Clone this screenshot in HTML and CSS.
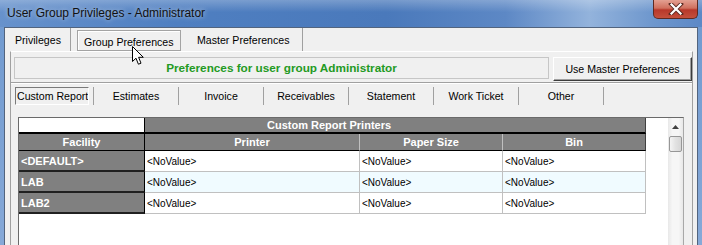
FILE: index.html
```html
<!DOCTYPE html>
<html lang="en">
<head>
    <meta charset="UTF-8">
    <title>User Group Privileges - Administrator</title>
    <link rel="stylesheet" href="styles.css">
</head>
<body>
    <div class="window">
        <div class="titlebar">
            <span class="title">User Group Privileges - Administrator</span>
            <div class="close">
                <svg width="16" height="12" viewBox="0 0 16 12">
                    <path d="M3 1 L13 11 M13 1 L3 11" stroke="#5a2a22" stroke-width="4" stroke-linecap="square"/>
                    <path d="M3.5 1.5 L12.5 10.5 M12.5 1.5 L3.5 10.5" stroke="#fff" stroke-width="2.2" stroke-linecap="square"/>
                </svg>
            </div>
        </div>

        <div class="client">
            <div class="tabs">
                <div class="tab tab-first">Privileges</div>
                <div class="tab tab-active">Group Preferences</div>
                <div class="tab tab-last">Master Preferences</div>
            </div>

            <div class="panel">
                <div class="toolbar">
                    <div class="caption">Preferences for user group Administrator</div>
                    <button class="btn">Use Master Preferences</button>
                </div>

                <div class="subtabs">
                    <div class="subtab subtab-first"><span class="subtab-sel">Custom Report</span></div>
                    <div class="subtab">Estimates</div>
                    <div class="subtab">Invoice</div>
                    <div class="subtab">Receivables</div>
                    <div class="subtab">Statement</div>
                    <div class="subtab">Work Ticket</div>
                    <div class="subtab">Other</div>
                </div>

                <div class="grid">
                    <table class="sheet">
                        <colgroup>
                            <col class="col-facility">
                            <col class="col-printer">
                            <col class="col-paper">
                            <col class="col-bin">
                        </colgroup>
                        <tr class="band-row">
                            <td class="blank"></td>
                            <td class="band" colspan="3">Custom Report Printers</td>
                        </tr>
                        <tr class="head-row">
                            <td class="head head-first">Facility</td>
                            <td class="head">Printer</td>
                            <td class="head">Paper Size</td>
                            <td class="head head-last">Bin</td>
                        </tr>
                        <tr class="data-row">
                            <td class="facility">&lt;DEFAULT&gt;</td>
                            <td>&lt;NoValue&gt;</td>
                            <td>&lt;NoValue&gt;</td>
                            <td>&lt;NoValue&gt;</td>
                        </tr>
                        <tr class="data-row alt">
                            <td class="facility">LAB</td>
                            <td>&lt;NoValue&gt;</td>
                            <td>&lt;NoValue&gt;</td>
                            <td>&lt;NoValue&gt;</td>
                        </tr>
                        <tr class="data-row">
                            <td class="facility">LAB2</td>
                            <td>&lt;NoValue&gt;</td>
                            <td>&lt;NoValue&gt;</td>
                            <td>&lt;NoValue&gt;</td>
                        </tr>
                    </table>

                    <div class="scrollbar">
                        <div class="scroll-up">
                            <svg width="7" height="4" viewBox="0 0 7 4"><path d="M0 4 L3.5 0 L7 4 Z" fill="#404040"/></svg>
                        </div>
                        <div class="thumb"></div>
                    </div>
                </div>
            </div>
        </div>

        <!-- mouse pointer over the tab strip -->
        <svg class="cursor" width="13" height="20" viewBox="0 0 13 20">
            <path d="M0.5 0.5 L0.5 15.5 L4 12.2 L6.4 18.2 L9 17.2 L6.6 11.3 L11.3 11.3 Z" fill="#fff" stroke="#000" stroke-width="1" stroke-linejoin="round"/>
        </svg>
    </div>
</body>
</html>
```

FILE: styles.css
```css
body {
    margin: 0;
    width: 702px;
    height: 245px;
    overflow: hidden;
    background: linear-gradient(to bottom, #6f99cf, #86a9d8);
    font-family: "Liberation Sans", Arial, sans-serif;
    font-size: 10.6px;
    color: #000;
}
.window {
    position: relative;
    height: 245px;
    overflow: hidden;
}
.titlebar {
    height: 27px;
    display: flex;
    align-items: flex-start;
    background:
        linear-gradient(to bottom, rgba(255,255,255,0.25), rgba(255,255,255,0) 45%),
        linear-gradient(to right, #6792cc 0%, #4f7fc1 25%, #4a79bb 55%, #5d88c5 72%, #93b3dc 84%, #6e97cd 93%, #5c88c6 100%);
}
.title {
    padding: 5px 0 0 7px;
    line-height: 16px;
    font-size: 12px;
    color: #111;
    text-shadow: 0 0 5px rgba(255,255,255,0.7);
}
.close {
    margin-left: auto;
    margin-right: 4px;
    width: 43px;
    height: 18px;
    border: 1px solid #5e2a22;
    border-top: none;
    border-radius: 0 0 5px 5px;
    background: linear-gradient(to bottom, #e3a092 0%, #d0705e 45%, #b8382a 55%, #c4503c 100%);
    display: flex;
    align-items: center;
    justify-content: center;
}
.client {
    margin: 0 4px;
    height: 217px;
    overflow: hidden;
    border: 1px solid #52647e;
    border-bottom: none;
    background: #f0f0f0;
}

/* top tab strip */
.tabs {
    display: flex;
    height: 23px;
    padding-left: 3px;
}
.tab {
    display: flex;
    align-items: center;
    box-sizing: border-box;
    white-space: nowrap;
}
.tab-first {
    width: 63px;
    padding-left: 7px;
    border-right: 1px solid #a0a0a0;
}
.tab-active {
    width: 104px;
    height: 21px;
    margin: 2px 0 0 6px;
    padding-left: 6px;
    padding-top: 2px;
    border: 1px solid #a3a3a3;
    box-shadow: inset 1px 1px 0 #fff;
}
.tab-last {
    width: 122px;
    padding-left: 16px;
    border-right: 1px solid #a0a0a0;
}

.panel {
    margin: 0 4px 0 5px;
    height: 193px;
    border-left: 1px solid #a0a0a0;
    border-right: 1px solid #a0a0a0;
    border-top: 1px solid #fff;
}
.toolbar {
    display: flex;
    margin-top: 5px;
    height: 24px;
}
.caption {
    box-sizing: border-box;
    width: 535px;
    height: 22px;
    margin-left: 3px;
    border: 1px solid #c6c6c6;
    line-height: 20px;
    text-align: center;
    font-weight: bold;
    font-size: 11.75px;
    color: #239a23;
}
.btn {
    box-sizing: border-box;
    width: 139px;
    height: 24px;
    margin-left: 4px;
    padding: 0;
    font-family: inherit;
    font-size: 10.6px;
    color: #000;
    background: #f0f0f0;
    border: 1px solid;
    border-color: #fff #3c3c3c #3c3c3c #fff;
    box-shadow: inset -1px -1px 0 #a0a0a0;
}

/* report sub tabs */
.subtabs {
    display: flex;
    height: 24px;
    margin-top: 1px;
    padding-top: 4px;
    border-top: 1px solid #a0a0a0;
    box-shadow: inset 0 1px 0 #fff;
}
.subtab {
    box-sizing: border-box;
    width: 85px;
    height: 18px;
    line-height: 18px;
    text-align: center;
    border-right: 1px solid #a0a0a0;
    white-space: nowrap;
}
.subtab-first {
    width: 83px;
    padding-left: 4px;
    text-align: left;
}
.subtab-sel {
    display: block;
    box-sizing: border-box;
    width: 74px;
    height: 18px;
    line-height: 16px;
    padding-left: 1px;
    border: 1px solid;
    border-color: #7a7a7a #fff #fff #7a7a7a;
    overflow: hidden;
}

/* grid */
.grid {
    display: flex;
    justify-content: space-between;
    margin: 6px 8px 0 7px;
    height: 132px;
    background: #fff;
    border-top: 1px solid #6a6a6a;
    border-left: 1px solid #6a6a6a;
    border-right: 1px solid #a8a8a8;
}
.sheet {
    border-spacing: 0;
    table-layout: fixed;
    width: 627px;
    height: 96px;
}
.col-facility { width: 126px; }
.col-printer { width: 215px; }
.col-paper { width: 143px; }
.col-bin { width: 143px; }
.sheet td {
    box-sizing: border-box;
    padding: 0 0 0 2px;
    white-space: nowrap;
    overflow: hidden;
    font-size: 10px;
    border-right: 1px solid #c0c0c0;
    border-bottom: 1px solid #c0c0c0;
}
.band-row td {
    height: 16px;
}
.sheet td.blank {
    background: #fff;
    border-right: 1px solid #000;
    border-bottom: 2px solid #000;
}
.sheet td.band {
    background: #808080;
    color: #fff;
    font-weight: bold;
    font-size: 11px;
    padding-left: 122px;
    border-right: 1px solid #404040;
    border-bottom: 2px solid #000;
}
.head-row td {
    height: 17px;
}
.sheet td.head {
    background: #808080;
    color: #fff;
    font-weight: bold;
    font-size: 11px;
    text-align: center;
    padding: 0;
    border-bottom: 1px solid #000;
}
.sheet td.head-first {
    border-right: 1px solid #000;
}
.sheet td.head-last {
    border-right: 1px solid #404040;
}
.data-row td {
    height: 21px;
}
.data-row.alt td {
    background: #f0fbff;
}
.sheet td.facility,
.data-row.alt td.facility {
    background: #808080;
    color: #fff;
    font-weight: bold;
    font-size: 11px;
    border-right: 1px solid #000;
    border-bottom: 2px solid #202020;
}

.scrollbar {
    width: 15px;
    background: linear-gradient(to right, #e8e8e8, #f6f6f6 30%, #f6f6f6 70%, #e8e8e8);
}
.scroll-up {
    height: 17px;
    display: flex;
    align-items: center;
    justify-content: center;
}
.thumb {
    box-sizing: border-box;
    width: 13px;
    height: 16px;
    margin: 1px 0 0 1px;
    border: 1px solid #979797;
    border-radius: 2px;
    background: linear-gradient(to right, #f4f4f4, #e2e2e2 50%, #d6d6d6);
}

.cursor {
    position: absolute;
    left: 132px;
    top: 46px;
}
```
